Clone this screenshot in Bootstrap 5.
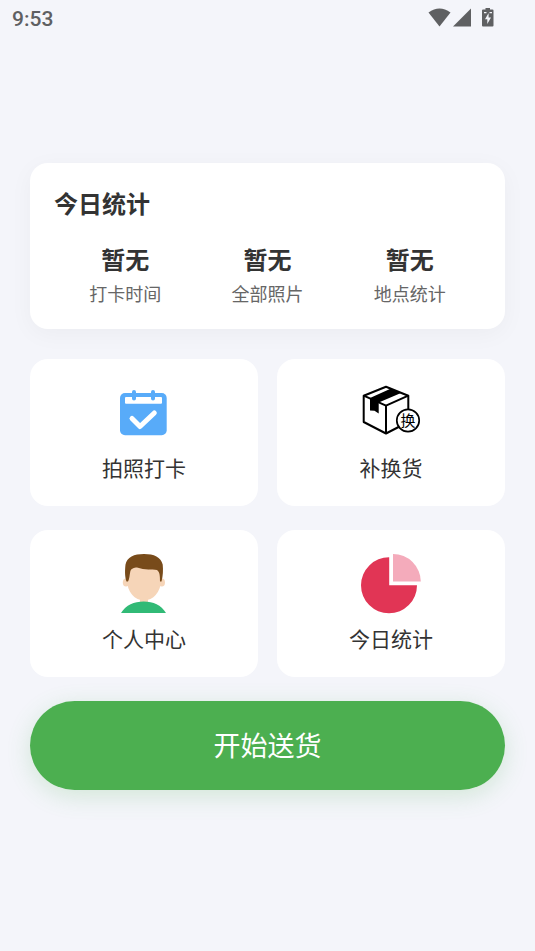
<!DOCTYPE html>
<html lang="zh-CN">
<head>
<meta charset="utf-8">
<meta name="viewport" content="width=device-width, initial-scale=1">
<title>今日统计</title>
<link href="https://cdn.jsdelivr.net/npm/bootstrap@5.3.0/dist/css/bootstrap.min.css" rel="stylesheet">
<style>
body { background: #f4f5fa; color: #333; font-family: Roboto, "Noto Sans CJK SC", sans-serif; }
.status-bar { padding: 3px 40px 0 12px; color: #5f6062; font-size: 21px; line-height: 32px; font-weight: 500; }
.status-icons { margin-bottom: 2px; }
.page-body { padding: 128px 30px 30px; }
.panel { background: #fff; border-radius: 18px; }
.stats-panel { padding: 26px 24px 22px; margin-bottom: 30px; box-shadow: 0 5px 24px rgba(0, 0, 0, .04); }
.strong-text { font-size: 24px; line-height: 32px; font-weight: 700; margin: 0; }
.stats-title { margin-bottom: 24px; }
.stat-label { font-size: 18px; line-height: 24px; margin-top: 6px; color: #666; }
.tiles { --bs-gutter-x: 19px; --bs-gutter-y: 24px; }
.tile { padding: 24px 12px 23px; color: #333; font-size: 21px; line-height: 28px; gap: 12px; }
.start-btn { margin-top: 24px; padding: 26px 24px 22px; font-size: 27px; line-height: 41px; color: #fff; background: #4caf50; box-shadow: 0 6px 24px rgba(76, 175, 80, .2); }
.start-btn:hover { color: #fff; background: #43a047; }
</style>
</head>
<body>
<header class="status-bar d-flex align-items-center justify-content-between">
  <span>9:53</span>
  <svg class="status-icons" width="68" height="20" viewBox="0 0 68 20" fill="#5f6062" aria-hidden="true">
    <path d="M1.500 4.500Q12.500-3.500 23.500 4.500L12.500 18.500Z"/>
    <path d="M44 .5V18.500H26Z"/>
    <path fill-rule="evenodd" d="M58.500 0H63V1.500H65.500Q66.500 1.500 66.500 2.500V17.500Q66.500 18.500 65.500 18.500H56Q55 18.500 55 17.500V2.500Q55 1.500 56 1.500H58.500ZM61.300 5.500L58 11.300H60.300V16L64 9.500H61.600V5.500ZM57 4V5.300H59.500V4ZM62.500 4V5.300H65V4Z"/>
  </svg>
</header>
<main class="page-body">
  <section class="panel stats-panel">
    <h1 class="strong-text stats-title">今日统计</h1>
    <div class="row g-0 text-center">
      <div class="col"><p class="strong-text">暂无</p><div class="stat-label">打卡时间</div></div>
      <div class="col"><p class="strong-text">暂无</p><div class="stat-label">全部照片</div></div>
      <div class="col"><p class="strong-text">暂无</p><div class="stat-label">地点统计</div></div>
    </div>
  </section>
  <nav class="row row-cols-2 tiles">
    <div class="col">
      <a href="#" class="panel tile d-flex flex-column align-items-center text-decoration-none">
        <svg width="60" height="60" viewBox="0 0 60 60" aria-hidden="true">
          <rect x="6" y="10" width="46.700" height="42.300" rx="5" fill="#58abf9"/>
          <rect x="11" y="14" width="37" height="6.700" rx="1" fill="#fff"/>
          <path d="M20 9V15.500M39 9V15.500" stroke="#58abf9" stroke-width="4" stroke-linecap="round"/>
          <path d="M18 35.500L26 43.500L40.300 30" fill="none" stroke="#fff" stroke-width="5" stroke-linecap="round" stroke-linejoin="round"/>
        </svg>
        <span>拍照打卡</span>
      </a>
    </div>
    <div class="col">
      <a href="#" class="panel tile d-flex flex-column align-items-center text-decoration-none">
        <svg width="60" height="60" viewBox="0 0 60 60" aria-hidden="true">
          <path d="M25 3.700L47.300 12.700V39L25 50.500L2.700 39V12.700Z" fill="#fff" stroke="#000" stroke-width="2" stroke-linejoin="round"/>
          <path d="M2.700 12.700L25 22.700L47.300 12.700M25 22.700V50.500" fill="none" stroke="#000" stroke-width="2" stroke-linejoin="round"/>
          <path d="M9 15L29.500 5.800L40 10L17.700 19.500V30.500L13.500 27.700L9 27.500Z"/>
          <circle cx="47" cy="37.500" r="11.200" fill="#fff" stroke="#000" stroke-width="1.700"/>
          <text x="47" y="43" text-anchor="middle" font-size="15">换</text>
        </svg>
        <span>补换货</span>
      </a>
    </div>
    <div class="col">
      <a href="#" class="panel tile d-flex flex-column align-items-center text-decoration-none">
        <svg width="60" height="60" viewBox="0 0 60 60" aria-hidden="true">
          <g fill="#f6d5b8">
            <path d="M26 42H34V51H26Z"/>
            <ellipse cx="12" cy="28.500" rx="3.200" ry="4"/>
            <ellipse cx="47.800" cy="28.500" rx="3.200" ry="4"/>
            <path d="M13 12H47V26C47 38 39 46.500 30 46.500S13 38 13 26Z"/>
          </g>
          <path d="M12.500 27.500C10.500 22 11 15 11.500 10.500C13 3 20 0 30 0S47 3 48.700 10.500C49.300 16 49 22 47.500 27.500H46C46 23 46 18 43 16C38 15.500 31 16.200 23 13.500C20 13.500 17 14.500 16.300 17.500C15.500 21 15.500 25 14 27.500Z" fill="#784b1a"/>
          <path d="M7 59C12 51 20 47.500 29.700 47.500S47 51 52 59Z" fill="#31ba76"/>
        </svg>
        <span>个人中心</span>
      </a>
    </div>
    <div class="col">
      <a href="#" class="panel tile d-flex flex-column align-items-center text-decoration-none">
        <svg width="60" height="60" viewBox="0 0 60 60" aria-hidden="true">
          <path d="M28.200 3.300A28 28 0 1 0 56 31.200H28.200Z" fill="#e13555"/>
          <path d="M32 0A27.800 27.800 0 0 1 59.800 27.500H32Z" fill="#f4abbb"/>
        </svg>
        <span>今日统计</span>
      </a>
    </div>
  </nav>
  <button type="button" class="btn border-0 rounded-pill w-100 start-btn">开始送货</button>
</main>
<script src="https://cdn.jsdelivr.net/npm/bootstrap@5.3.0/dist/js/bootstrap.bundle.min.js"></script>
</body>
</html>
